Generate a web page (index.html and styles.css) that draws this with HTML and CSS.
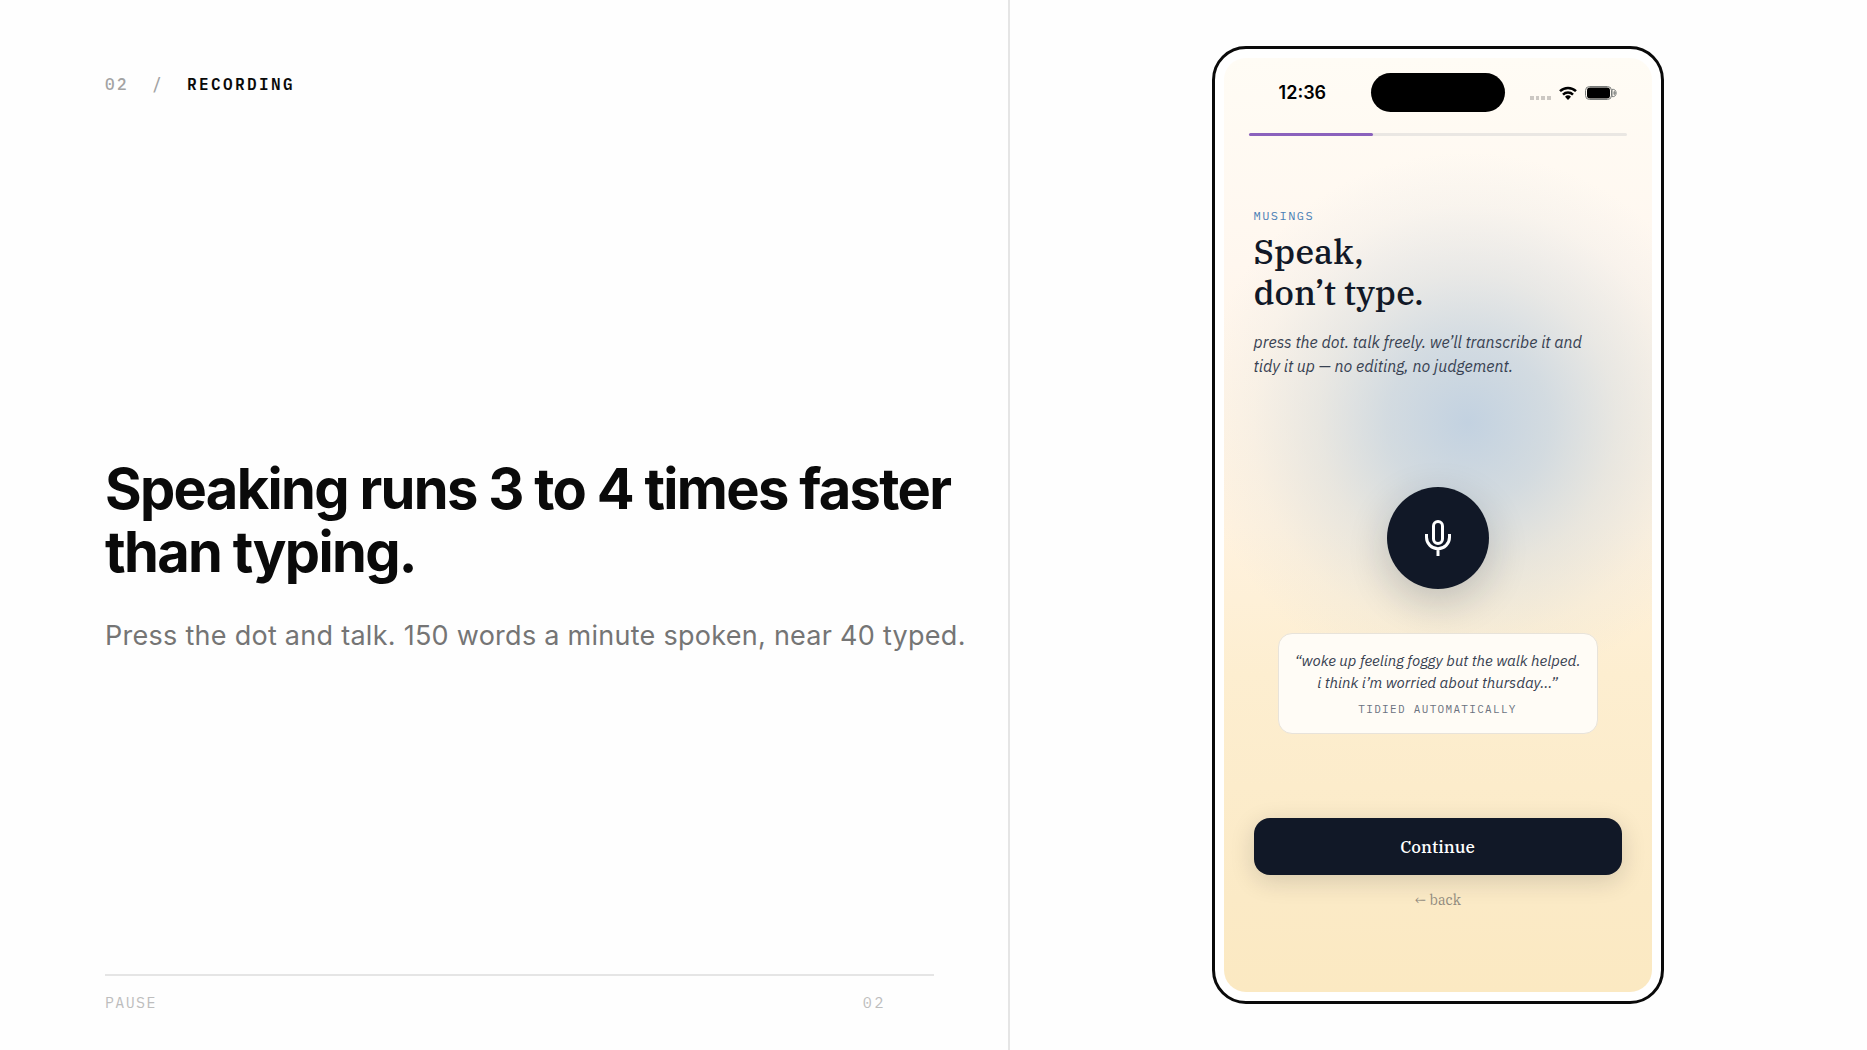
FILE: index.html
```
<!DOCTYPE html>
<html lang="en">
<head>
<meta charset="utf-8">
<meta name="viewport" content="width=device-width, initial-scale=1">
<title>Pause – Recording</title>
<link rel="stylesheet" href="styles.css">
</head>
<body>
<main class="slide">
  <section class="copy">
    <header class="crumbs">
      <span>02</span><span>/</span><strong class="crumbs-current">RECORDING</strong>
    </header>
    <div class="message">
      <h1 class="headline">Speaking runs 3 to 4 times faster<br>than typing.</h1>
      <p class="subline">Press the dot and talk. 150 words a minute spoken, near 40 typed.</p>
    </div>
    <footer class="foot">
      <span>PAUSE</span><span class="foot-page">02</span>
    </footer>
  </section>

  <section class="stage">
    <div class="phone">
      <div class="screen">
        <div class="status">
          <span class="time">12:36</span>
          <span class="island"></span>
          <span class="indicators">
            <svg class="dots" width="21" height="14" viewBox="0 0 21 14" aria-hidden="true">
              <path d="M0 10h4v4H0zM6 10h3v4H6zM11 10h4v4h-4zM17 10h4v4h-4z" fill="#ccc8c3"/>
            </svg>
            <svg class="wifi" width="18" height="14" viewBox="0 0 18 14" aria-hidden="true">
              <path d="M1 5.200a11.600 11.600 0 0 1 16 0M4 8.600a7.200 7.200 0 0 1 10 0" fill="none" stroke="#000" stroke-width="2.500"/>
              <path d="M6 10.800a4.300 4.300 0 0 1 6 0L9 14z" fill="#000"/>
            </svg>
            <svg class="battery" width="32" height="14" viewBox="0 0 32 14" aria-hidden="true">
              <rect x="0.500" y="0.500" width="26" height="13" rx="4" fill="none" stroke="#777a78"/>
              <rect x="2" y="1.500" width="23" height="11" rx="3" fill="#000"/>
              <path d="M27 3.500c5.500-1.500 5.500 8.500 0 7zM29 5.500c1.500 0 1.500 3 0 3z" fill="none" stroke="#777a78"/>
            </svg>
          </span>
        </div>
        <div class="progress" role="progressbar" aria-label="Onboarding" aria-valuenow="33" aria-valuemin="0" aria-valuemax="100">
          <div class="progress-fill" style="width:33%"></div>
        </div>
        <div class="intro">
          <p class="eyebrow">MUSINGS</p>
          <h2 class="title">Speak,<br>don’t type.</h2>
          <p class="lead">press the dot. talk freely. we’ll transcribe it and<br>tidy it up — no editing, no judgement.</p>
        </div>
        <div class="recorder">
          <button class="mic" type="button" aria-label="Record">
            <svg width="26" height="36" viewBox="0 0 26 36" fill="none" stroke="#fff" stroke-width="3" aria-hidden="true">
              <rect x="8.500" y="1.500" width="9" height="22" rx="4.500"/>
              <path d="M1.500 14v3.300a11.500 11.500 0 0 0 23 0V14M13 28.800V36"/>
            </svg>
          </button>
          <div class="quote">
            <p class="quote-text">“woke up feeling foggy but the walk helped.<br>i think i’m worried about thursday...”</p>
            <p class="quote-note">TIDIED AUTOMATICALLY</p>
          </div>
        </div>
        <div class="actions">
          <button class="continue" type="button">Continue</button>
          <a class="back" href="#">← back</a>
        </div>
      </div>
    </div>
  </section>
</main>
</body>
</html>
```
FILE: styles.css
```
* {
  box-sizing: border-box;
}

body {
  margin: 0;
  background: #fefefe;
  color: #0a0a0a;
  font-family: Inter, sans-serif;
}

h1, h2, p {
  margin: 0;
}

.slide {
  display: grid;
  grid-template-columns: 54% 46%;
  min-height: 100vh;
}

.copy {
  display: flex;
  flex-direction: column;
  justify-content: space-between;
  padding: 72px 74px 35px 105px;
}

.crumbs,
.foot {
  font-family: "IBM Plex Mono", "Liberation Mono", monospace;
}

.crumbs {
  display: flex;
  gap: 23px;
  color: #a3a3a3;
  font-size: 16px;
  font-weight: 500;
  line-height: 24px;
  letter-spacing: 0.15em;
}

.crumbs-current {
  color: #0a0a0a;
  font-weight: 600;
}

.message {
  padding-top: 44px;
}

.headline {
  font-size: 56px;
  font-weight: 700;
  line-height: 63px;
  letter-spacing: -0.03em;
  white-space: nowrap;
}

.subline {
  margin-top: 32px;
  color: #757575;
  font-size: 27px;
  line-height: 40px;
  letter-spacing: 0.01em;
  white-space: nowrap;
}

.foot {
  display: flex;
  justify-content: space-between;
  padding: 15px 48px 0 0;
  border-top: 2px solid #e5e5e5;
  color: #bdbdbd;
  font-size: 15px;
  line-height: 24px;
  letter-spacing: 0.09em;
}

.foot-page {
  letter-spacing: 0.18em;
}

.stage {
  display: flex;
  justify-content: center;
  padding: 46px 26px 46px 24px;
  border-left: 2px solid #e5e5e5;
}

.phone {
  display: flex;
  width: 452px;
  padding: 9px;
  border: 3px solid #0a0a0a;
  border-radius: 34px;
  background: #fff;
}

.screen {
  display: flex;
  flex: 1;
  flex-direction: column;
  padding: 15px 25px 82px;
  border-radius: 22px;
  background:
    radial-gradient(circle 270px at 57% 39%, rgba(188, 206, 224, 0.9), rgba(192, 208, 222, 0.7) 30%, rgba(204, 214, 220, 0.44) 55%, rgba(214, 220, 222, 0.16) 80%, rgba(220, 224, 224, 0)),
    linear-gradient(#fffcf5, #fff7ef 22%, #fff2df 50%, #fdeed0 66%, #fbeac6 90%, #fbe9c2);
}

.status {
  display: grid;
  grid-template-columns: 1fr 134px 1fr;
  align-items: center;
}

.time {
  padding-left: 30px;
  color: #000;
  font-size: 18px;
  font-weight: 600;
  line-height: 24px;
}

.island {
  height: 39px;
  border-radius: 20px;
  background: #000;
}

.indicators {
  display: flex;
  gap: 8px;
  justify-content: flex-end;
  padding-right: 10px;
}

.progress {
  height: 3px;
  margin-top: 21px;
  border-radius: 2px;
  background: #eae7e3;
}

.progress-fill {
  height: 100%;
  border-radius: 2px;
  background: #8b62bd;
}

.intro {
  padding: 72px 5px 0;
}

.eyebrow {
  color: #4a7fb5;
  font-family: "IBM Plex Mono", "Liberation Mono", monospace;
  font-size: 12px;
  line-height: 16px;
  letter-spacing: 0.12em;
}

.title {
  margin-top: 7px;
  color: #111827;
  font-family: "IBM Plex Serif", "DejaVu Serif Condensed", "DejaVu Serif", serif;
  font-size: 34px;
  font-weight: 500;
  line-height: 41px;
}

.lead,
.quote-text {
  font-family: "IBM Plex Sans", "Open Sans", sans-serif;
  font-style: italic;
  color: #374151;
  white-space: nowrap;
}

.lead {
  margin-top: 17px;
  font-size: 16px;
  line-height: 24px;
}

.recorder {
  display: flex;
  flex: 1;
  flex-direction: column;
  gap: 44px;
  align-items: center;
  justify-content: center;
  padding-top: 24px;
}

.mic {
  display: grid;
  width: 102px;
  height: 102px;
  padding: 0;
  border: 0;
  border-radius: 50%;
  background: #111827;
  place-items: center;
  box-shadow: 0 12px 40px rgba(17, 24, 39, 0.2);
}

.quote {
  padding: 16px;
  border: 1px solid #e8e3da;
  border-radius: 14px;
  background: #fffcf6;
  text-align: center;
}

.quote-text {
  font-size: 15px;
  line-height: 22px;
}

.quote-note {
  margin-top: 7px;
  color: #6b7280;
  font-family: "IBM Plex Mono", "Liberation Mono", monospace;
  font-size: 11px;
  line-height: 16px;
  letter-spacing: 0.12em;
}

.actions {
  display: flex;
  flex-direction: column;
  gap: 15px;
  align-items: center;
  padding: 0 5px;
  font-family: "IBM Plex Serif", "DejaVu Serif Condensed", "DejaVu Serif", serif;
}

.continue {
  align-self: stretch;
  height: 57px;
  border: 0;
  border-radius: 16px;
  background: #111827;
  color: #fff;
  font: inherit;
  font-size: 17px;
  font-weight: 500;
  box-shadow: 0 6px 24px rgba(17, 24, 39, 0.16);
}

.back {
  color: #918b7e;
  font-size: 14px;
  line-height: 20px;
  text-decoration: none;
}
```
